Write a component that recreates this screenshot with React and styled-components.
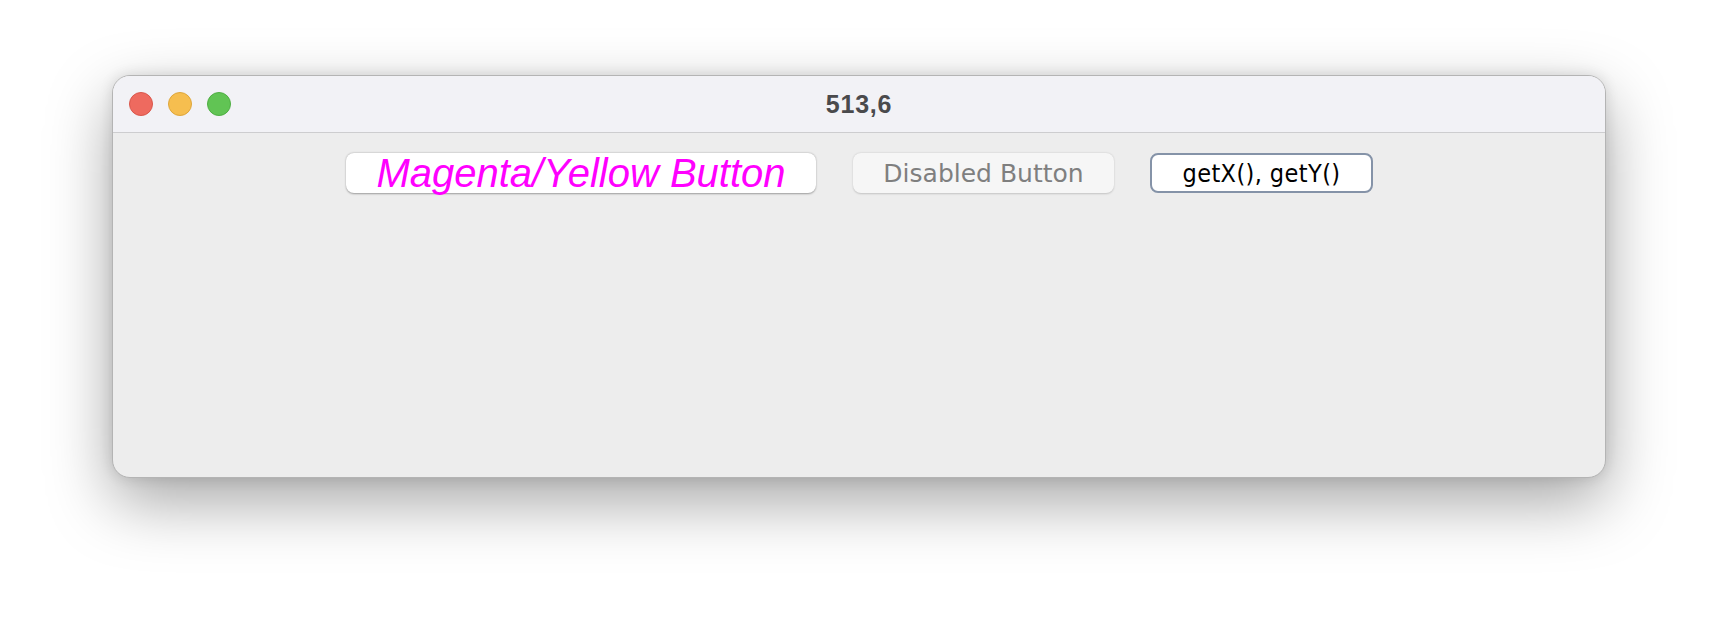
import styled, { createGlobalStyle } from 'styled-components';

const GlobalStyle = createGlobalStyle`
  html, body {
    margin: 0;
    padding: 0;
    background: #ffffff;
  }
`;

const Page = styled.div`
  width: 1718px;
  height: 624px;
  padding: 75px 0 0 112px;
  box-sizing: border-box;
`;

const Window = styled.div`
  width: 1494px;
  height: 403px;
  border-radius: 18px;
  overflow: hidden;
  background: #ededed;
  border: 1px solid #b4b4b4;
  box-sizing: border-box;
  box-shadow: 0 24px 64px rgba(0, 0, 0, 0.35), 0 0 14px rgba(0, 0, 0, 0.12);
  display: flex;
  flex-direction: column;
`;

const TitleBar = styled.div`
  position: relative;
  height: 56px;
  flex-shrink: 0;
  background: #f2f2f6;
  border-bottom: 1px solid #cdcdcf;
  display: flex;
  align-items: center;
  justify-content: center;
`;

const Lights = styled.div`
  position: absolute;
  left: 16px;
  top: 16px;
  display: flex;
  gap: 15px;
`;

const Light = styled.span`
  width: 24px;
  height: 24px;
  border-radius: 50%;
  background: ${({ $color }) => $color};
  border: 1px solid ${({ $edge }) => $edge};
  box-sizing: border-box;
`;

const Title = styled.div`
  font-family: 'Liberation Sans', Arial, sans-serif;
  font-weight: 700;
  font-size: 25px;
  letter-spacing: 0.8px;
  color: #4a4a4c;
`;

const Content = styled.div`
  flex: 1;
  display: flex;
  align-items: flex-start;
  padding: 20px 0 0 233px;
`;

const Button = styled.div`
  box-sizing: border-box;
  height: 40px;
  margin-left: ${({ $gap }) => $gap || 0}px;
  width: ${({ $w }) => $w}px;
  border-radius: 8px;
  display: flex;
  align-items: center;
  justify-content: center;
  white-space: nowrap;
`;

const MagentaButton = styled(Button)`
  background: #ffffff;
  box-shadow: 0 0.5px 2px rgba(0, 0, 0, 0.35);
  color: #ff00ff;
  font-family: 'Liberation Sans', Arial, sans-serif;
  font-style: italic;
  font-size: 40px;
`;

const DisabledButton = styled(Button)`
  background: #f6f6f6;
  box-shadow: 0 0.5px 2px rgba(0, 0, 0, 0.18);
  color: #7f7f7f;
  font-family: 'DejaVu Sans', sans-serif;
  font-size: 25px;
`;

const FocusButton = styled(Button)`
  background: #ffffff;
  border: 2px solid #8593a8;
  color: #000000;
  font-family: 'DejaVu Sans Condensed', 'DejaVu Sans', sans-serif;
  font-size: 25px;
  letter-spacing: 0.4px;
`;

export default function App() {
  return (
    <>
      <GlobalStyle />
      <Page>
        <Window>
          <TitleBar>
            <Lights>
              <Light $color="#ee6a5f" $edge="#d9574c" />
              <Light $color="#f6be4f" $edge="#dea63b" />
              <Light $color="#61c454" $edge="#4fae43" />
            </Lights>
            <Title>513,6</Title>
          </TitleBar>
          <Content>
            <MagentaButton $w={470}>Magenta/Yellow Button</MagentaButton>
            <DisabledButton $w={261} $gap={37}>Disabled Button</DisabledButton>
            <FocusButton $w={223} $gap={36}>getX(), getY()</FocusButton>
          </Content>
        </Window>
      </Page>
    </>
  );
}
